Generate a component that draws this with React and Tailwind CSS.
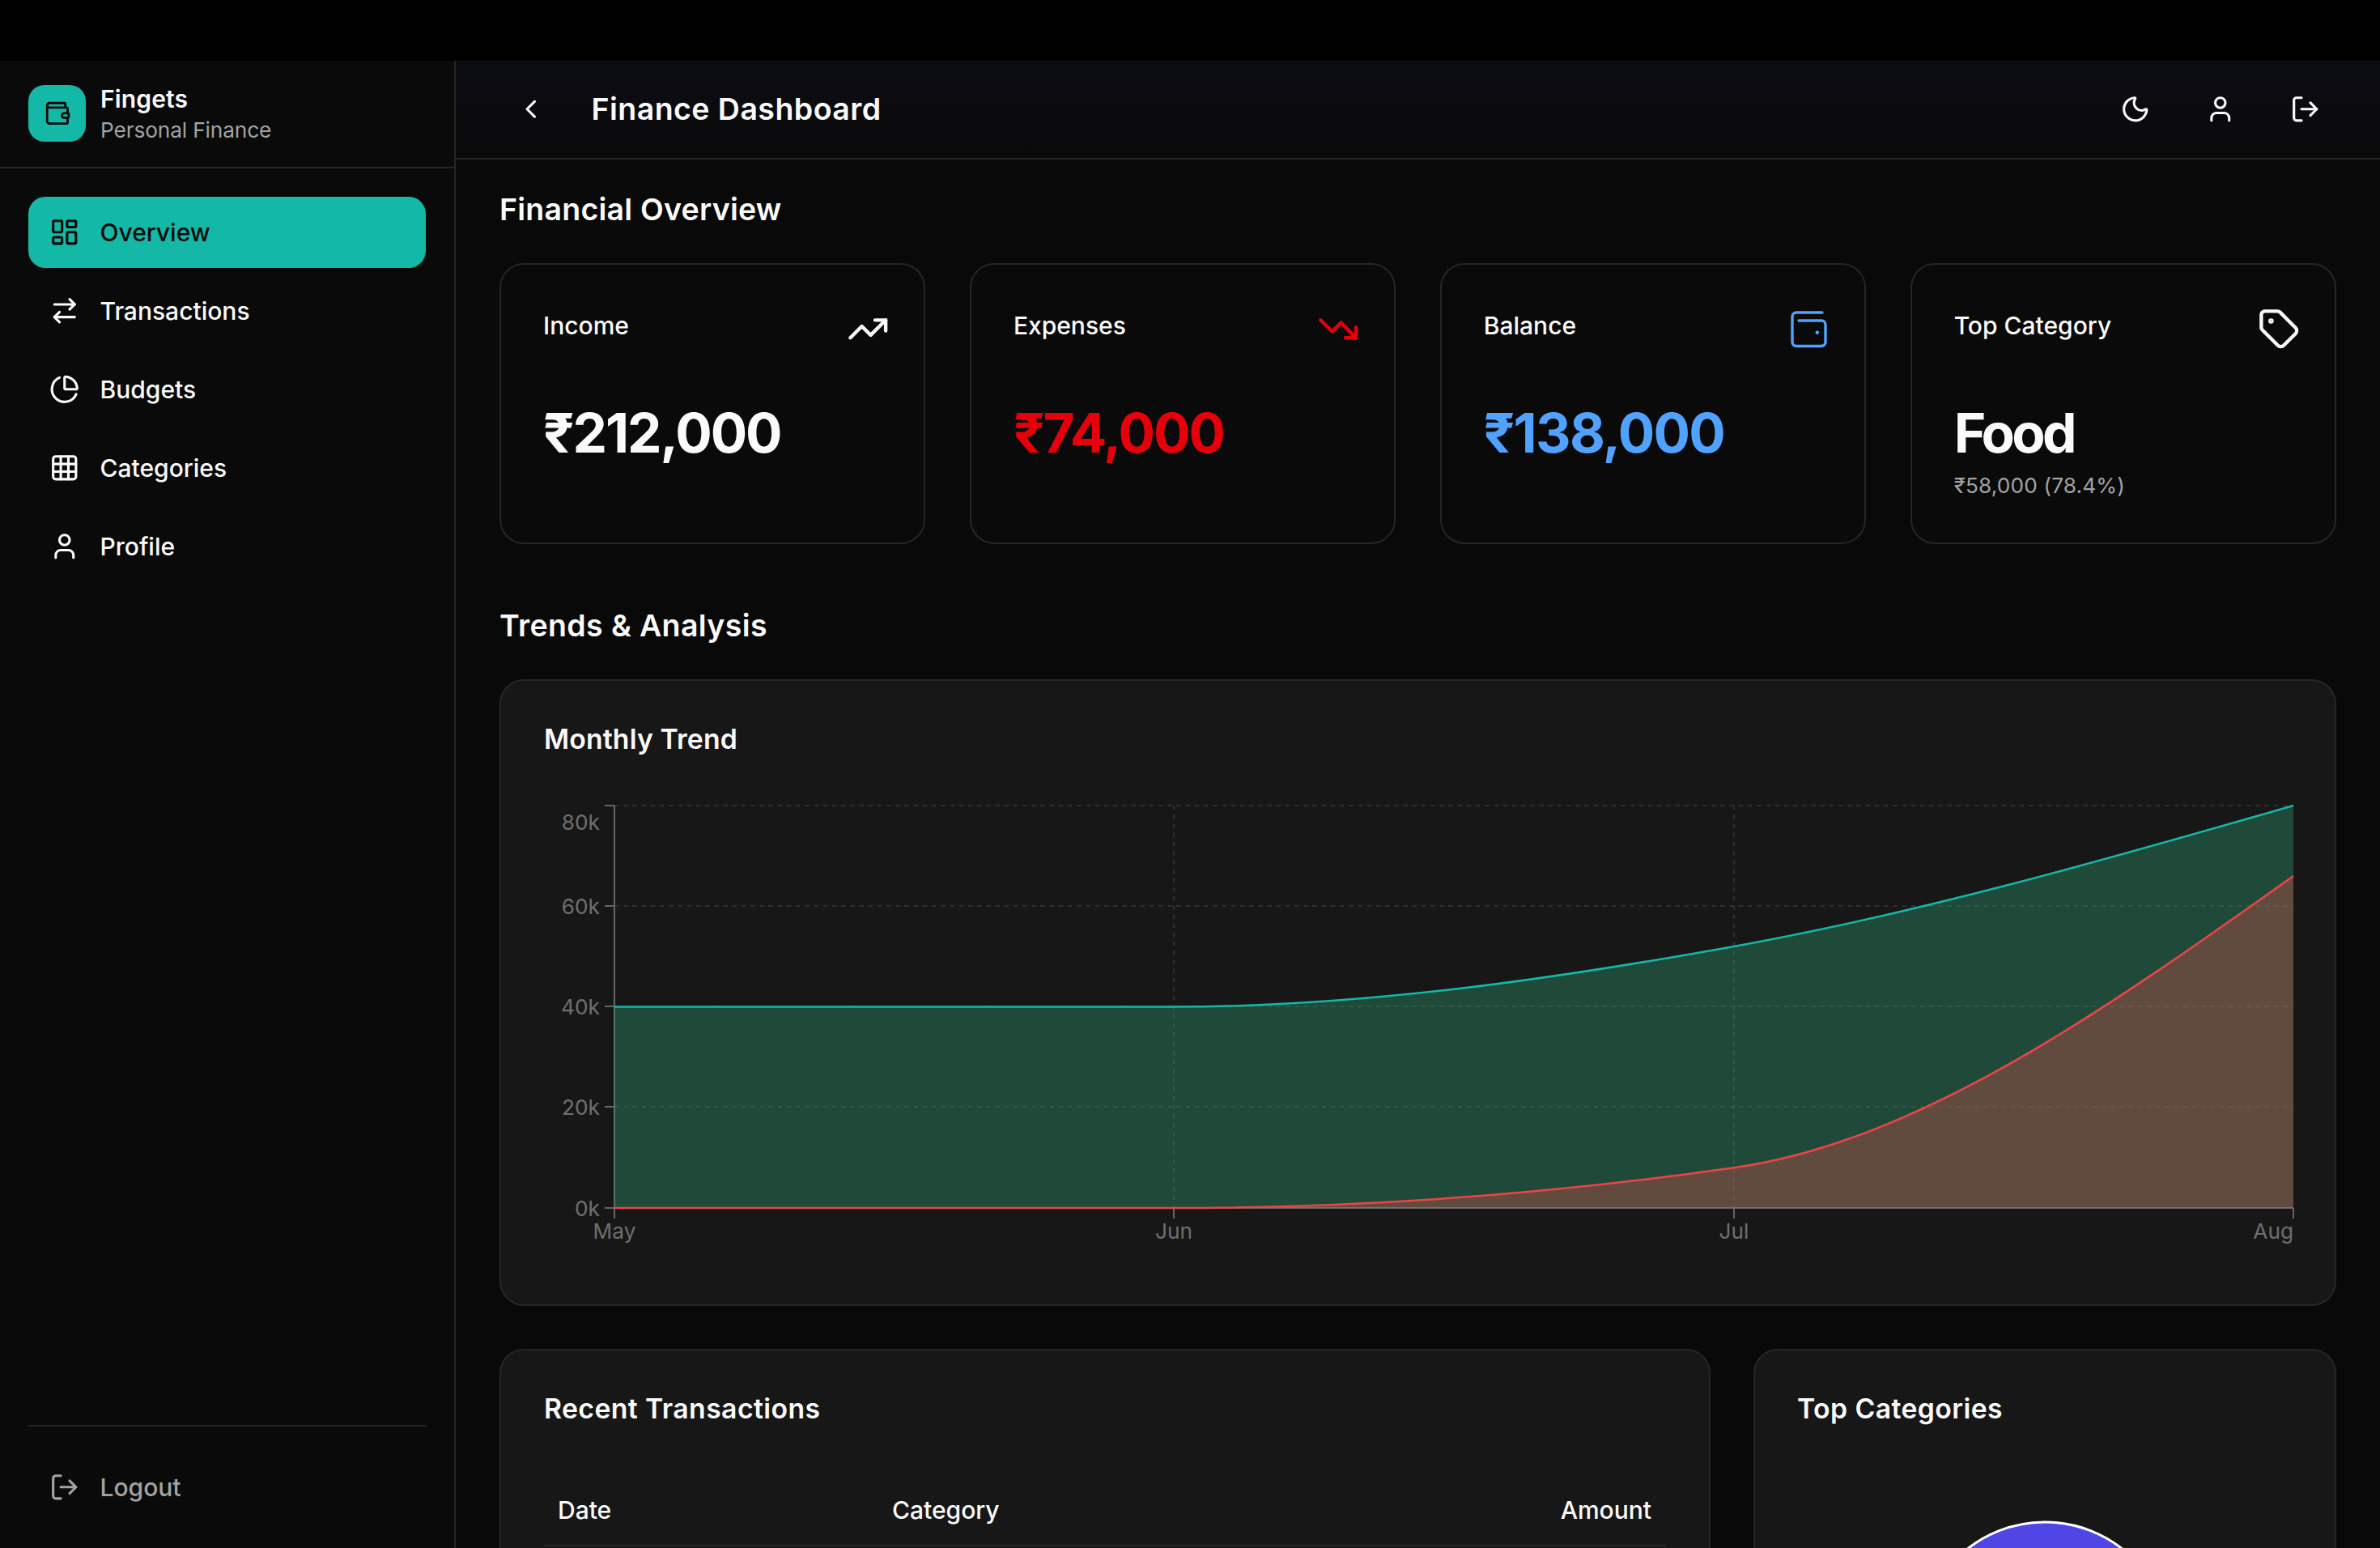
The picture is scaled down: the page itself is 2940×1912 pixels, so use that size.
import {
  ArrowRightLeft,
  ChartPie,
  ChevronLeft,
  Grid3x3,
  LayoutDashboard,
  LogOut,
  Moon,
  Tag,
  TrendingDown,
  TrendingUp,
  User,
  Wallet,
} from "lucide-react";

const nav = [
  { label: "Overview", icon: LayoutDashboard, active: true },
  { label: "Transactions", icon: ArrowRightLeft },
  { label: "Budgets", icon: ChartPie },
  { label: "Categories", icon: Grid3x3 },
  { label: "Profile", icon: User },
];

// px positions of the chart, in page coordinates
const xs = [759, 1450, 2142, 2833];
const yOf = (k) => 1492 - k * 6.2125;
const income = [40, 40, 52, 80];
const expenses = [0, 0, 8, 66];

const sign = (v) => (v < 0 ? -1 : 1);

// same curve as d3 curveMonotoneX
function monotone(values) {
  const ys = values.map(yOf);
  const t = xs.map(() => 0);
  for (let i = 1; i < xs.length - 1; i++) {
    const h0 = xs[i] - xs[i - 1];
    const h1 = xs[i + 1] - xs[i];
    const s0 = (ys[i] - ys[i - 1]) / h0;
    const s1 = (ys[i + 1] - ys[i]) / h1;
    const p = (s0 * h1 + s1 * h0) / (h0 + h1);
    t[i] = (sign(s0) + sign(s1)) * Math.min(Math.abs(s0), Math.abs(s1), 0.5 * Math.abs(p)) || 0;
  }
  const n = xs.length - 1;
  t[0] = (3 * (ys[1] - ys[0])) / (xs[1] - xs[0]) / 2 - t[1] / 2;
  t[n] = (3 * (ys[n] - ys[n - 1])) / (xs[n] - xs[n - 1]) / 2 - t[n - 1] / 2;
  let d = `M${xs[0]},${ys[0]}`;
  for (let i = 0; i < n; i++) {
    const dx = (xs[i + 1] - xs[i]) / 3;
    d += `C${xs[i] + dx},${ys[i] + dx * t[i]} ${xs[i + 1] - dx},${ys[i + 1] - dx * t[i + 1]} ${xs[i + 1]},${ys[i + 1]}`;
  }
  return d;
}

function BalanceIcon() {
  return (
    <svg width="52.5" height="52.5" viewBox="0 0 52.5 52.5" fill="none" stroke="#51a2ff" strokeWidth="3.4" strokeLinecap="round">
      <path d="M43 6H11a5 5 0 0 0-5 5V42.5a5 5 0 0 0 5 5H42a5 5 0 0 0 5-5V21a5 5 0 0 0-5-5H14" />
      <circle cx="36.8" cy="30.7" r="2.3" fill="#51a2ff" stroke="none" />
    </svg>
  );
}

function StatCard({ label, value, valueClass, icon, sub }) {
  return (
    <div className="rounded-[30px] border-2 border-[#262626] bg-[#0a0a0a] pt-[53px] pb-[52px] pl-[52px] pr-[43px]">
      <div className="flex items-start justify-between">
        <span className="text-[30px] leading-[45px] font-medium text-[#fafafa]">{label}</span>
        {icon}
      </div>
      <div className={`mt-[64px] text-[67.5px] leading-[75px] font-bold ${valueClass}`}>{value}</div>
      {sub && <div className="mt-[9px] text-[26.25px] leading-[37.5px] tracking-[0.005em] text-[#a3a3a3]">{sub}</div>}
    </div>
  );
}

function TrendChart() {
  const incomeLine = monotone(income);
  const expenseLine = monotone(expenses);
  const yTicks = [
    { y: 995, label: "80k", textY: 1015 },
    { y: 1119, label: "60k", textY: 1119 },
    { y: 1243, label: "40k", textY: 1243 },
    { y: 1367, label: "20k", textY: 1367 },
    { y: 1492, label: "0k", textY: 1492 },
  ];
  const xLabels = ["May", "Jun", "Jul", "Aug"];

  return (
    <svg className="block overflow-visible" width="2161" height="610" viewBox="672 945 2161 610" fontFamily="Inter, sans-serif" fontSize="26.25">
      {/* grid */}
      <g stroke="#2f2f2f" strokeWidth="2" strokeDasharray="5.6 5.6">
        {yTicks.slice(0, 4).map((t) => (
          <line key={t.label} x1="759" x2="2833" y1={t.y} y2={t.y} />
        ))}
        <line x1="1450" x2="1450" y1="995" y2="1492" />
        <line x1="2142" x2="2142" y1="995" y2="1492" />
      </g>

      {/* axes */}
      <g stroke="#666666" strokeWidth="2">
        <line x1="759" x2="759" y1="995" y2="1492" />
        <line x1="759" x2="2833" y1="1492" y2="1492" />
        {yTicks.map((t) => (
          <line key={t.label} x1="747" x2="759" y1={t.y} y2={t.y} />
        ))}
        {xs.map((x) => (
          <line key={x} x1={x} x2={x} y1="1492" y2="1505" />
        ))}
      </g>
      <g fill="#6f6f6f">
        {yTicks.map((t) => (
          <text key={t.label} x="741" y={t.textY} textAnchor="end" dominantBaseline="central">
            {t.label}
          </text>
        ))}
        {xLabels.map((m, i) => (
          <text key={m} x={xs[i]} y="1520" textAnchor={i === 3 ? "end" : "middle"} dominantBaseline="central">
            {m}
          </text>
        ))}
      </g>

      {/* areas */}
      <path d={`${incomeLine}L2833,1492L759,1492Z`} fill="#32c18c" fillOpacity="0.3" />
      <path d={incomeLine} fill="none" stroke="#14b8a6" strokeWidth="2.5" />
      <path d={`${expenseLine}L2833,1492L759,1492Z`} fill="#ce4f46" fillOpacity="0.38" />
      <path d={expenseLine} fill="none" stroke="#ef4444" strokeWidth="2.5" />
    </svg>
  );
}

export default function App() {
  return (
    <div className="h-[1912px] overflow-hidden bg-black pt-[75px] [font-family:Inter,sans-serif] text-[#fafafa]">
      <div className="flex h-[1837px]">
        {/* Sidebar */}
        <aside className="flex w-[563px] shrink-0 flex-col border-r-2 border-[#262626] bg-[#0a0a0a]">
          <div className="flex h-[133px] items-start gap-[18px] border-b-2 border-[#262626] pl-[35px] pt-[30px]">
            <div className="flex h-[70px] w-[71px] items-center justify-center rounded-[20px] bg-[#14b8a6]">
              <Wallet size={33.75} color="#0a0a0a" />
            </div>
            <div className="-mt-[3px] flex flex-col">
              <span className="text-[30px] leading-[40px] font-semibold tracking-[0.005em]">Fingets</span>
              <span className="text-[26.25px] leading-[38px] tracking-[-0.005em] text-[#a3a3a3]">Personal Finance</span>
            </div>
          </div>

          <nav className="mt-[35px] flex flex-col gap-[9px] px-[35px]">
            {nav.map(({ label, icon: Icon, active }) => (
              <div
                key={label}
                className={`flex h-[88px] items-center gap-[25px] rounded-[21px] pl-[26px] text-[30px] font-medium ${
                  active ? "bg-[#14b8a6] text-[#0a0a0a]" : "text-[#fafafa]"
                }`}
              >
                <Icon size={37.5} strokeWidth={2} />
                {label}
              </div>
            ))}
          </nav>

          <div className="mx-[35px] mt-auto border-t-2 border-[#262626] pt-[31px] pb-[31px]">
            <div className="flex h-[88px] items-center gap-[25px] pl-[26px] text-[30px] font-medium text-[#a3a3a3]">
              <LogOut size={37.5} strokeWidth={2} />
              Logout
            </div>
          </div>
        </aside>

        {/* Main */}
        <div className="flex min-w-0 flex-1 flex-col bg-[#090909]">
          <header className="flex h-[122px] shrink-0 items-center justify-between border-b-2 border-[#262626] bg-gradient-to-b from-[#0c0c14] to-[#0a0a0a] pr-[74px] pl-[74px]">
            <div className="flex items-center gap-[56px]">
              <ChevronLeft size={37.5} strokeWidth={2} />
              <h1 className="text-[37.5px] leading-[50px] font-semibold tracking-[0.012em]">Finance Dashboard</h1>
            </div>
            <div className="flex items-center gap-[67.5px]">
              <Moon size={37.5} />
              <User size={37.5} />
              <LogOut size={37.5} />
            </div>
          </header>

          <main className="px-[54px] pt-[37px]">
            <h2 className="text-[37.5px] leading-[50px] font-semibold tracking-[0.006em]">Financial Overview</h2>

            <div className="mt-[41px] grid grid-cols-4 gap-[54.5px]">
              <StatCard
                label="Income"
                value="₹212,000"
                valueClass="text-[#fafafa] tracking-[-0.03em]"
                icon={<TrendingUp size={52.5} color="#fafafa" />}
              />
              <StatCard
                label="Expenses"
                value="₹74,000"
                valueClass="text-[#e7000b] tracking-[-0.03em]"
                icon={<TrendingDown size={52.5} color="#e7000b" />}
              />
              <StatCard
                label="Balance"
                value="₹138,000"
                valueClass="text-[#51a2ff] tracking-[-0.025em]"
                icon={<BalanceIcon />}
              />
              <StatCard
                label="Top Category"
                value="Food"
                valueClass="text-[#fafafa] tracking-[-0.055em]"
                icon={<Tag size={52.5} color="#fafafa" />}
                sub="₹58,000 (78.4%)"
              />
            </div>

            <h2 className="mt-[76px] text-[37.5px] leading-[50px] font-semibold tracking-[0.01em]">Trends &amp; Analysis</h2>

            <section className="mt-[41px] rounded-[30px] border-2 border-[#262626] bg-[#171717] pt-[48px] pr-[50px] pb-[56px] pl-[53px]">
              <h3 className="text-[33.75px] leading-[47px] font-semibold tracking-[0.004em]">Monthly Trend</h3>
              <div className="mt-[9px]">
                <TrendChart />
              </div>
            </section>

            <div className="mt-[53px] flex gap-[53px]">
              <section className="h-[500px] w-[1496px] shrink-0 rounded-[30px] border-2 border-[#262626] bg-[#171717] px-[53px] pt-[48px]">
                <h3 className="text-[33.75px] leading-[47px] font-semibold tracking-[0.012em]">Recent Transactions</h3>
                <div className="mt-[80px] flex border-b-2 border-[#262626] pr-[18px] pb-[20px] pl-[17px] text-[30px] leading-[45px] font-medium">
                  <span className="w-[413px]">Date</span>
                  <span className="flex-1">Category</span>
                  <span>Amount</span>
                </div>
              </section>

              <section className="h-[500px] min-w-0 flex-1 rounded-[30px] border-2 border-[#262626] bg-[#171717] pt-[48px] pr-[53px] pl-[52px]">
                <h3 className="text-[33.75px] leading-[47px] font-semibold tracking-[0.012em]">Top Categories</h3>
                <div className="mt-[112px] flex justify-center">
                  <svg width="320" height="320" viewBox="0 0 320 320">
                    <circle cx="160" cy="160" r="155" fill="#4f46e5" stroke="#ffffff" strokeWidth="3" />
                  </svg>
                </div>
              </section>
            </div>
          </main>
        </div>
      </div>
    </div>
  );
}
